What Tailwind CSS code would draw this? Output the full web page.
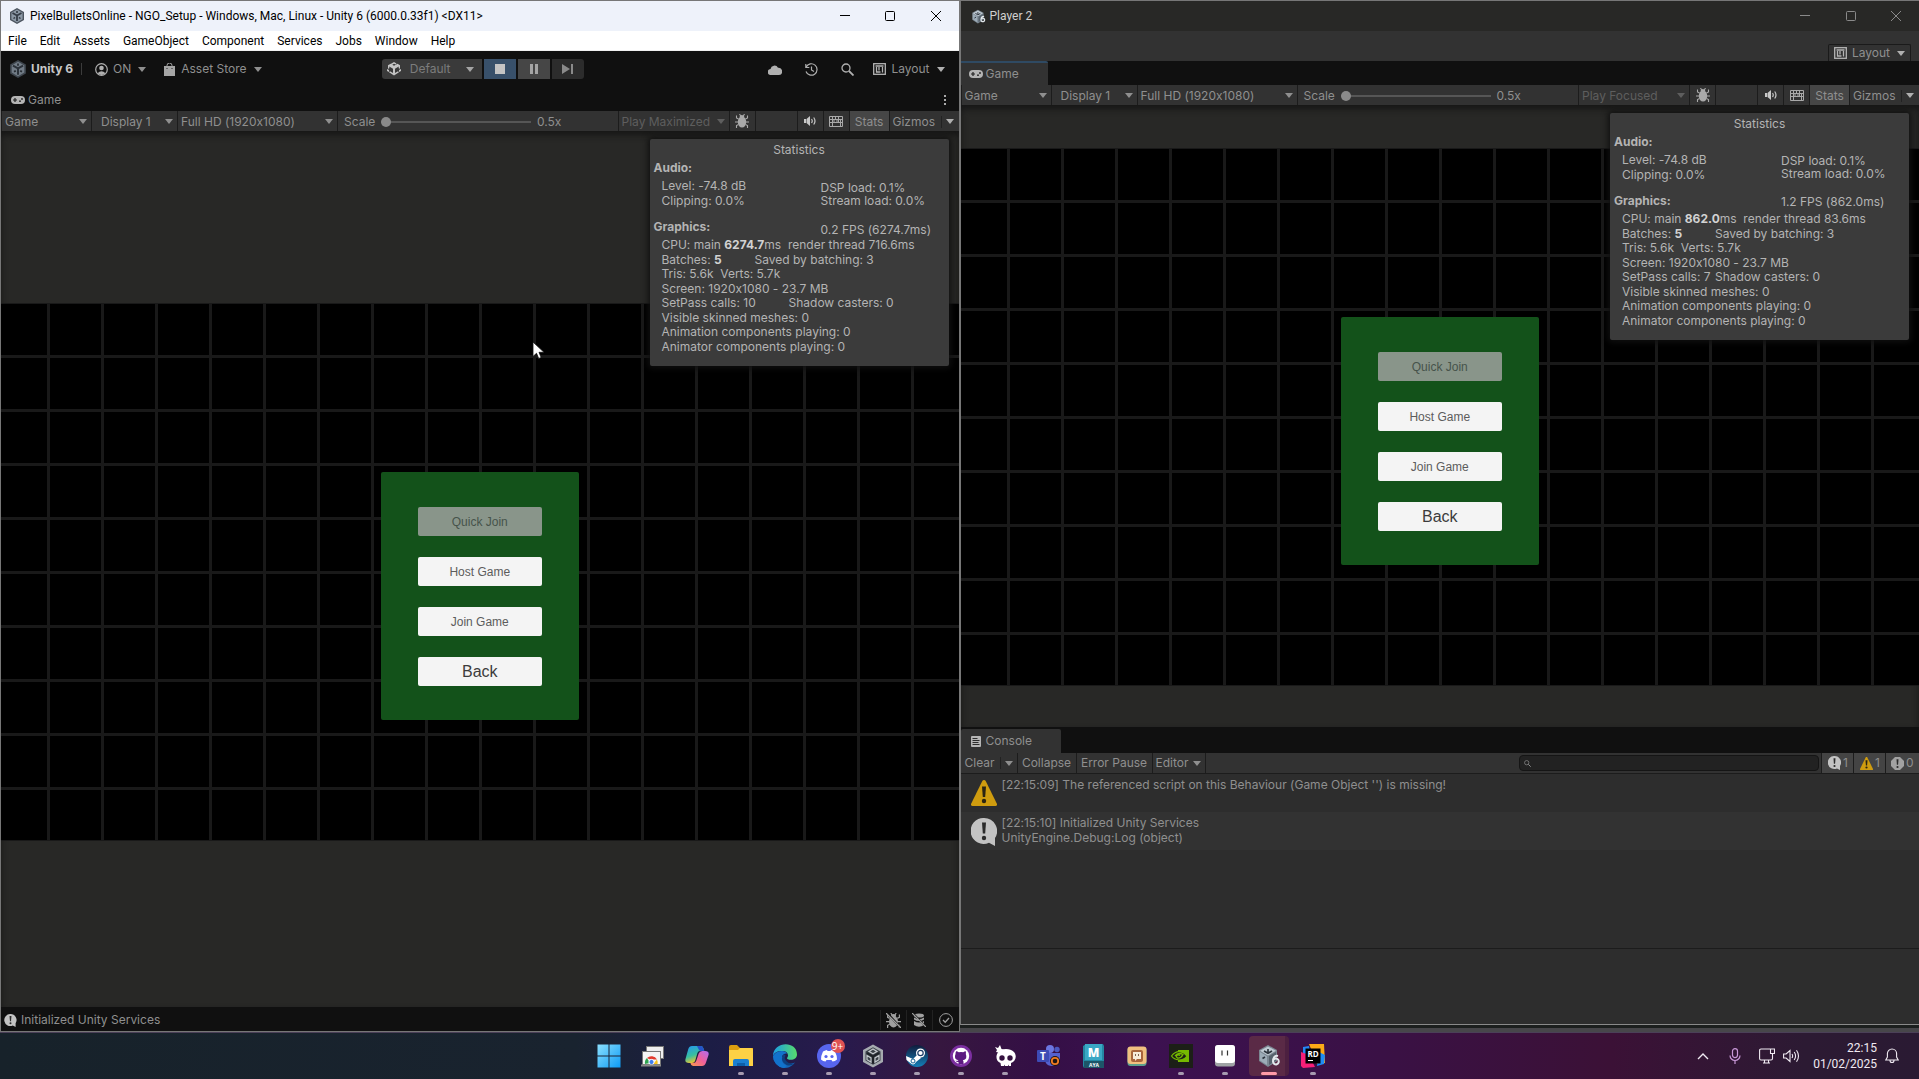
<!DOCTYPE html>
<html lang="en">
<head>
<meta charset="utf-8">
<title>Unity 6 desktop</title>
<script src="https://cdn.jsdelivr.net/npm/@tailwindcss/browser@4"></script>
</head>
<body class="h-screen overflow-hidden flex flex-col bg-[#47464a] font-['Inter',sans-serif] [font-feature-settings:'calt'_0] text-[12px] leading-4 text-[#8f8f8f]">

<!-- Shared icon symbols -->
<svg class="hidden" aria-hidden="true">
  <symbol id="arrow" viewBox="0 0 8 5"><path d="M0 0h8L4 5z" fill="currentColor"/></symbol>
  <symbol id="unity" viewBox="0 0 16 16">
    <path d="M8 0l7 4v8l-7 4-7-4V4z" fill="#4b545e"/>
    <path d="M8 1.500L13.600 4.800v6.400L8 14.500 2.400 11.200V4.800z" fill="#8b98a5"/>
    <path d="M8 7.500L3.500 5M8 7.500L12.500 5M8 7.500V13" stroke="#343c46" stroke-width="1.800" fill="none"/>
    <path d="M8 3v2M4.500 10.500l1.500-1M11.500 10.500l-1.500-1" stroke="#2b323a" stroke-width="1.500"/>
  </symbol>
  <symbol id="unity6" viewBox="0 0 24 24">
    <path d="M11 1l9 5v11l-9 6-9-6V6z" fill="#7b8792"/>
    <path d="M11 2.500l8 4.300-8 4.700-8-4.700z" fill="#bfcad3"/>
    <path d="M3 8l7 4.200v8.800l-7-4.500z" fill="#9dacb8"/>
    <path d="M19 8l-7 4.200v8.800l7-4.500z" fill="#56626d"/>
    <path d="M11 5v3M5.500 14.500l2.500-1.500M7 7l4 2.300L15 7" stroke="#2c343d" stroke-width="1.600" fill="none"/>
    <path d="M21 12c-3.500-1-5 2-5 5.500a2.900 2.900 0 1 0 .6-1.800" stroke="#e3e8ec" stroke-width="2" fill="none"/>
  </symbol>
  <symbol id="cube" viewBox="0 0 14 14">
    <path d="M4.500 1.500L7 0l2.500 1.500-.8 1L7 1.800l-1.700.9L7 3.700l3.500-2 2.500 1.500v3.500l-1.300-.4V4.500L8 6.700V11l3-1.700 1 1L7 13.500 2 10.300l1-1L6 11V6.700L2.300 4.500v1.800L1 6.700V3.200L3.200 2z" fill="#c4c4c4"/>
    <path d="M0 7l2 1v2l-2-1zM14 7l-2 1v2l2-1z" fill="#c4c4c4"/>
  </symbol>
  <symbol id="pad" viewBox="0 0 14 8">
    <rect width="14" height="8" rx="4" fill="#b4b4b4"/>
    <path d="M4 2v4M2 4h4" stroke="#222" stroke-width="1.200"/>
    <circle cx="9" cy="5.200" r=".9" fill="#222"/><circle cx="11" cy="3" r=".9" fill="#222"/>
  </symbol>
  <symbol id="bug" viewBox="0 0 14 14">
    <ellipse cx="7" cy="8" rx="4.200" ry="5.500" fill="currentColor"/>
    <path d="M4.500 3.500a2.500 2.500 0 0 1 5 0z" fill="currentColor"/>
    <path d="M4.500 0l1.200 2M9.500 0L8.300 2M3.500 5L1.500 4V1.500M10.500 5l2-1V1.500M3 8H0M11 8h3M3.500 10.500l-2 1V14M10.500 10.500l2 1V14" stroke="currentColor" stroke-width="1.100" fill="none"/>
  </symbol>
  <symbol id="speaker" viewBox="0 0 14 12">
    <path d="M1 4h2v4H1zM3.500 4L7 1v10L3.500 8z" fill="#c8c8c8"/>
    <path d="M8.500 4q1.500 2 0 4M10.700 2.500q2.600 3.500 0 7" stroke="#c8c8c8" stroke-width="1.200" fill="none"/>
  </symbol>
  <symbol id="keyboard" viewBox="0 0 14 11">
    <path d="M.5.500h13v10H.5zM.5 3.500h13M.5 6.500h13M3.500.500v6M6.500.500v3M9.500.500v6M5 3.500v3M8 3.500v3M11.500 3.500v7M3.500 6.500v4" stroke="#a9a9a9" fill="none"/>
  </symbol>
  <symbol id="layout" viewBox="0 0 13 12">
    <rect x=".7" y=".7" width="11.600" height="10.600" stroke="#b5b5b5" stroke-width="1.300" fill="none"/>
    <path d="M2.500 3h8M3.500 4v5.500M6 4v3.500M3 9h4.500M9.500 4v5.500" stroke="#b5b5b5" stroke-width="1.300"/>
  </symbol>
  <symbol id="search" viewBox="0 0 13 13"><circle cx="5" cy="5" r="4" stroke="currentColor" stroke-width="1.300" fill="none"/><path d="M8 8l4.500 4.500" stroke="currentColor" stroke-width="1.800"/></symbol>
  <symbol id="log" viewBox="0 0 26 28"><path d="M13 0a13 13 0 0 1 11 20v8l-6-3.200A13 13 0 1 1 13 0z" fill="#c3c3c3"/><path d="M11 4.500h4l-.8 11h-2.400z" fill="#2b2b2b"/><circle cx="13" cy="20" r="2.200" fill="#2b2b2b"/></symbol>
  <symbol id="warn" viewBox="0 0 26 26"><path d="M11.300 1a2 2 0 0 1 3.400 0L26 24q.2 2-1.500 2h-23Q-.2 26 0 24z" fill="#cf9c0f"/><path d="M11 6.500h4l-.8 10.500h-2.400z" fill="#2b2413"/><circle cx="13" cy="21" r="2.200" fill="#2b2413"/></symbol>
  <symbol id="error" viewBox="0 0 26 26"><path d="M8 0h10l8 8v10l-8 8H8l-8-8V8z" fill="#a2a2a2"/><path d="M11 4.500h4l-.8 11h-2.400z" fill="#2b2b2b"/><circle cx="13" cy="20" r="2.200" fill="#2b2b2b"/></symbol>
</svg>

<main class="flex-1 min-h-0 grid grid-cols-2">

  <!-- Main editor -->
  <section class="min-w-0 flex flex-col border border-[#777] bg-[#101010]" aria-label="Unity editor">
    <header class="h-[30px] shrink-0 flex items-center bg-[#eef2fa] pl-2 text-black font-['Roboto',sans-serif]">
      <svg class="size-4"><use href="#unity"/></svg>
      <h1 class="ml-[5px] flex-1">PixelBulletsOnline - NGO_Setup - Windows, Mac, Linux - Unity 6 (6000.0.33f1) &lt;DX11&gt;</h1>
      <button class="w-[46px] h-full grid place-items-center" aria-label="Minimise"><svg class="size-[10px]" viewBox="0 0 10 10"><path d="M0 4.500h10" stroke="currentColor"/></svg></button>
      <button class="w-[45px] h-full grid place-items-center" aria-label="Maximise"><svg class="size-[10px]" viewBox="0 0 10 10"><rect x=".5" y=".5" width="9" height="9" rx="1" fill="none" stroke="currentColor"/></svg></button>
      <button class="w-[46px] h-full grid place-items-center" aria-label="Close"><svg class="size-[10px]" viewBox="0 0 10 10"><path d="M0 0l10 10M10 0L0 10" stroke="currentColor"/></svg></button>
    </header>
    <nav class="h-5 shrink-0 flex items-center gap-[13px] border-b border-[#f0f0f0] bg-white pl-[7px] pt-px text-black font-['Roboto',sans-serif]">
      <a href="#">File</a><a href="#">Edit</a><a href="#">Assets</a><a href="#">GameObject</a><a href="#">Component</a><a href="#">Services</a><a href="#">Jobs</a><a href="#">Window</a><a href="#">Help</a>
    </nav>

    <div class="h-9 shrink-0 grid grid-cols-[1fr_auto_1fr] items-center">
      <div class="flex items-center pl-2">
        <svg class="size-[18px] opacity-80"><use href="#unity"/></svg>
        <b class="ml-1 font-bold text-[#c8c8c8]">Unity 6</b>
        <span class="ml-2 h-3 w-px bg-[#3c3c3c]"></span>
        <button class="ml-[13px] flex items-center">
          <svg class="size-[13px]" viewBox="0 0 13 13"><circle cx="6.500" cy="6.500" r="5.800" stroke="#b0b0b0" stroke-width="1.200" fill="none"/><circle cx="6.500" cy="5" r="2.300" fill="#b0b0b0"/><path d="M2.500 10.300q4-4 8 0-4 3.400-8 0z" fill="#b0b0b0"/></svg>
          <span class="ml-[5px]">ON</span><svg class="ml-[7px] w-2 h-[5px]"><use href="#arrow"/></svg>
        </button>
        <button class="ml-[18px] flex items-center">
          <svg class="w-[11px] h-[13px]" viewBox="0 0 11 13"><path d="M0 3h11v10H0z" fill="#a5a5a5"/><path d="M3 5V2.500a2.500 2.500 0 0 1 5 0V5" stroke="#a5a5a5" fill="none"/><path d="M3 5v1M8 5v1" stroke="#222"/></svg>
          <span class="ml-[6px]">Asset Store</span><svg class="ml-[7px] w-2 h-[5px]"><use href="#arrow"/></svg>
        </button>
      </div>
      <div class="ml-[6px] flex gap-[2px] h-5">
        <label class="w-[100px] grid grid-cols-[28px_1fr_16px] items-center rounded-l-[3px] bg-[#3a3a3a]" aria-label="Play mode scenario">
          <svg class="size-[14px] ml-[5px] col-start-1 row-start-1"><use href="#cube"/></svg>
          <svg class="w-2 h-[5px] col-start-3 row-start-1 text-[#a5a5a5]"><use href="#arrow"/></svg>
          <select class="col-start-1 col-span-3 row-start-1 h-5 appearance-none bg-transparent pl-7 text-[#7c7c7c]"><option>Default</option></select>
        </label>
        <button class="w-8 grid place-items-center bg-[#38506a]" aria-label="Stop"><span class="size-[10px] bg-[#c4c4c4]"></span></button>
        <button class="w-8 flex items-center justify-center gap-[2px] bg-[#464646]" aria-label="Pause"><span class="w-[3px] h-[10px] bg-[#a5a5a5]"></span><span class="w-[3px] h-[10px] bg-[#a5a5a5]"></span></button>
        <button class="w-8 grid place-items-center rounded-r-[3px] bg-[#2c2c2c]" aria-label="Step"><svg class="w-[11px] h-[10px]" viewBox="0 0 11 10"><path d="M0 0l8 5-8 5zM9 0h2v10H9z" fill="#8a8a8a"/></svg></button>
      </div>
      <div class="flex items-center justify-end pr-[14px] text-[#b0b0b0]">
        <button aria-label="Cloud"><svg class="w-[14px] h-[11px]" viewBox="0 0 14 11"><path d="M3 11a3 3 0 0 1-.5-6A4 4 0 0 1 10 3.800 3.600 3.600 0 0 1 11 11z" fill="currentColor"/></svg></button>
        <button class="ml-[23px]" aria-label="History"><svg class="size-[13px]" viewBox="0 0 13 13"><path d="M1.200 4A5.700 5.700 0 1 1 1 8.500M.8 1v3.500h3.500M6.500 3.500V7l2.500 1.500" stroke="currentColor" stroke-width="1.200" fill="none"/></svg></button>
        <button class="ml-[23px]" aria-label="Search"><svg class="size-[13px]"><use href="#search"/></svg></button>
        <button class="ml-[19px] flex items-center text-[#8f8f8f]"><svg class="w-[13px] h-3"><use href="#layout"/></svg><span class="ml-[5px]">Layout</span><svg class="ml-[7px] w-2 h-[5px] text-[#b0b0b0]"><use href="#arrow"/></svg></button>
      </div>
    </div>

    <div class="h-6 shrink-0 flex items-center pl-[10px] pr-[13px] pt-[2px]">
      <svg class="w-[14px] h-2"><use href="#pad"/></svg><span class="ml-[3px] flex-1">Game</span>
      <button class="flex flex-col gap-[2px]" aria-label="Tab options"><span class="size-[2px] bg-[#aaa]"></span><span class="size-[2px] bg-[#aaa]"></span><span class="size-[2px] bg-[#aaa]"></span></button>
    </div>

    <!-- Game view toolbar -->
    <div class="h-5 shrink-0 flex gap-px bg-[#1c1c1c] pl-px">
      <label class="w-[89px] grid grid-cols-[1fr_12px] items-center bg-[#323232]"><svg class="w-2 h-[5px] col-start-2 row-start-1"><use href="#arrow"/></svg><select aria-label="View" class="col-start-1 col-span-2 row-start-1 h-5 appearance-none bg-transparent pl-[3px] pt-px"><option>Game</option></select></label>
      <label class="w-[85px] grid grid-cols-[1fr_12px] items-center bg-[#323232]"><svg class="w-2 h-[5px] col-start-2 row-start-1"><use href="#arrow"/></svg><select aria-label="Display" class="col-start-1 col-span-2 row-start-1 h-5 appearance-none bg-transparent pl-[9px] pt-px"><option>Display 1</option></select></label>
      <label class="w-[159px] grid grid-cols-[1fr_12px] items-center bg-[#323232]"><svg class="w-2 h-[5px] col-start-2 row-start-1"><use href="#arrow"/></svg><select aria-label="Resolution" class="col-start-1 col-span-2 row-start-1 h-5 appearance-none bg-transparent pl-[3px] pt-px"><option>Full HD (1920x1080)</option></select></label>
      <label class="flex-1 flex items-center bg-[#323232] pl-[6px] pt-px"><span class="w-[37px]">Scale</span>
        <input type="range" min="0" max="100" value="0" class="w-[150px] h-[10px] appearance-none bg-transparent [&::-webkit-slider-runnable-track]:h-[2px] [&::-webkit-slider-runnable-track]:bg-[#565656] [&::-webkit-slider-thumb]:appearance-none [&::-webkit-slider-thumb]:size-[10px] [&::-webkit-slider-thumb]:-mt-1 [&::-webkit-slider-thumb]:rounded-full [&::-webkit-slider-thumb]:bg-[#8a8a8a]"><span class="ml-[6px]">0.5x</span></label>
      <label class="w-[110px] grid grid-cols-[1fr_12px] items-center bg-[#323232] text-[#5e5e5e]"><svg class="w-2 h-[5px] col-start-2 row-start-1"><use href="#arrow"/></svg><select disabled aria-label="Play mode" class="col-start-1 col-span-2 row-start-1 h-5 appearance-none bg-transparent pl-[3px] pt-px opacity-100"><option>Play Maximized</option></select></label>
      <button class="w-[25px] grid place-items-center bg-[#323232] text-[#a9a9a9]" aria-label="Debug"><svg class="size-[14px]"><use href="#bug"/></svg></button>
      <span class="w-[41px] bg-[#323232]"></span>
      <button class="w-[25px] grid place-items-center bg-[#323232]" aria-label="Mute audio"><svg class="w-[14px] h-3"><use href="#speaker"/></svg></button>
      <button class="w-[25px] grid place-items-center bg-[#323232]" aria-label="Shortcuts"><svg class="w-[14px] h-[11px]"><use href="#keyboard"/></svg></button>
      <button class="w-[39px] bg-[#464646] pt-px">Stats</button>
      <div class="w-[69px] flex items-center bg-[#323232] pl-[3px] pt-px"><button class="flex-1 text-left">Gizmos</button><button class="h-3 w-[18px] flex items-center border-l border-[#222] pl-[4px]" aria-label="Gizmo options"><svg class="w-2 h-[5px] text-[#b0b0b0]"><use href="#arrow"/></svg></button></div>
    </div>

    <div class="relative flex-1 min-h-0 flex flex-col justify-center overflow-hidden bg-[#282826] pt-[6px] shadow-[inset_0_4px_6px_#161616]">
      <div class="w-full aspect-[958/538] flex justify-center items-start border-y border-[#191919] bg-black bg-[linear-gradient(#191919_3px,transparent_3px),linear-gradient(90deg,#191919_3px,transparent_3px)] [background-size:54px_54px] [background-position:46px_51px] pt-[168px]">
        <div class="w-[198px] h-[248px] flex flex-col items-center gap-[21px] rounded-[2px] bg-[#13521a] pt-[35px] font-['Liberation_Sans',sans-serif] text-[#5c5c5c]">
          <button disabled class="w-[124px] h-[29px] rounded-[2px] bg-[#89958a] pt-px text-[#46534a]">Quick Join</button>
          <button class="w-[124px] h-[29px] rounded-[2px] bg-[#f4f4f4] pt-px">Host Game</button>
          <button class="w-[124px] h-[29px] rounded-[2px] bg-[#f4f4f4] pt-px">Join Game</button>
          <button class="w-[124px] h-[29px] rounded-[2px] bg-[#f4f4f4] pt-px text-[16px] text-[#3c3c3c]">Back</button>
        </div>
      </div>

      <aside class="absolute top-2 right-[10px] w-[299px] h-[227px] rounded-[2px] bg-[#3b3b3b] px-1 pt-[3px] text-[#b4b4b4] shadow-[0_0_6px_2px_#101010]">
        <h2 class="text-center">Statistics</h2>
        <h3 class="mt-[2px] font-bold">Audio:</h3>
        <div class="mt-[2px] grid grid-cols-[159px_1fr] pl-2">
          <div class="leading-[15px]">Level: -74.8 dB<br>Clipping: 0.0%</div>
          <div class="pt-[3px] leading-[13px]">DSP load: 0.1%<br>Stream load: 0.0%</div>
        </div>
        <div class="mt-[11px] h-[19px] grid grid-cols-[167px_1fr]"><h3 class="font-bold">Graphics:</h3><span class="pt-[3px]">0.2 FPS (6274.7ms)</span></div>
        <div class="h-[116px] flex flex-col justify-between pl-2 leading-[14px] whitespace-pre"><p>CPU: main <b class="text-[#d2d2d2]">6274.7</b>ms  render thread 716.6ms</p><p class="grid grid-cols-[93px_1fr]"><span>Batches: <b class="text-[#d2d2d2]">5</b></span><span>Saved by batching: 3</span></p><p>Tris: 5.6k  Verts: 5.7k</p><p>Screen: 1920x1080 - 23.7 MB</p><p class="grid grid-cols-[127px_1fr]"><span>SetPass calls: 10</span><span>Shadow casters: 0</span></p><p>Visible skinned meshes: 0</p><p>Animation components playing: 0</p><p>Animator components playing: 0</p></div>
      </aside>

      <svg class="absolute left-[531px] top-[210px] w-[13px] h-[19px]" viewBox="0 0 13 19"><path d="M1 1v14.500l3.500-3.200 2.200 5.200 2.500-1-2.200-5.200h5z" fill="#fff" stroke="#111" stroke-width=".8"/></svg>
    </div>

    <footer class="h-6 shrink-0 flex items-center pl-[3px] pt-[2px]">
      <svg class="size-[13px]"><use href="#log"/></svg><span class="ml-1 flex-1">Initialized Unity Services</span>
      <button class="w-[26px] h-5 grid place-items-center border-l border-[#222] text-[#a0a0a0]" aria-label="Debugger off"><svg class="size-[15px]" viewBox="0 0 14 14"><use href="#bug"/><path d="M1 0l13 14" stroke="#101010" stroke-width="2"/><path d="M0 0l14 14" stroke="currentColor" stroke-width="1.200"/></svg></button>
      <button class="w-[26px] h-5 grid place-items-center border-l border-[#222] text-[#a0a0a0]" aria-label="Cache server off"><svg class="size-[14px]" viewBox="0 0 14 14"><ellipse cx="7" cy="2.500" rx="5" ry="2" fill="currentColor"/><path d="M2 4.500q5 3 10 0v2q-5 3-10 0zM2 8q5 3 10 0v4q-5 3.500-10 0z" fill="currentColor"/><path d="M1 0l13 14" stroke="#101010" stroke-width="1.500"/><path d="M0 0l14 14" stroke="currentColor" stroke-width="1.200"/></svg></button>
      <button class="w-[27px] h-5 grid place-items-center border-l border-[#222] text-[#a0a0a0]" aria-label="Progress"><svg class="size-[14px]" viewBox="0 0 14 14"><circle cx="7" cy="7" r="6.400" stroke="currentColor" fill="none"/><path d="M4 7l2.200 2.200L10 5" stroke="currentColor" stroke-width="1.300" fill="none"/></svg></button>
    </footer>
  </section>

  <!-- Second player window -->
  <section class="min-w-0 mb-[7px] flex flex-col border-t border-l border-b border-t-[#777] border-l-[#777] border-b-[#8a8a8a] bg-[#2d2d2d] shadow-[0_3px_0_#1c1f1e]" aria-label="Player 2">
    <header class="h-[30px] shrink-0 flex items-center bg-[#282826] pl-[10px] text-[#d0d0d0] font-['Roboto',sans-serif]">
      <svg class="size-[15px]"><use href="#unity6"/></svg>
      <h1 class="ml-1 flex-1">Player 2</h1>
      <button class="w-[46px] h-full grid place-items-center text-[#8a8a8a]" aria-label="Minimise"><svg class="size-[10px]" viewBox="0 0 10 10"><path d="M0 4.500h10" stroke="currentColor"/></svg></button>
      <button class="w-[45px] h-full grid place-items-center text-[#8a8a8a]" aria-label="Maximise"><svg class="size-[10px]" viewBox="0 0 10 10"><rect x=".5" y=".5" width="9" height="9" rx="1" fill="none" stroke="currentColor"/></svg></button>
      <button class="w-[46px] h-full grid place-items-center text-[#8a8a8a]" aria-label="Close"><svg class="size-[10px]" viewBox="0 0 10 10"><path d="M0 0l10 10M10 0L0 10" stroke="currentColor"/></svg></button>
    </header>
    <div class="h-[30px] shrink-0 flex items-end justify-end bg-[#323232] pr-2">
      <button class="h-[17px] flex items-center border border-b-0 border-[#1a1a1a] rounded-t-[2px] pl-[5px] pr-[5px]"><svg class="w-[13px] h-3"><use href="#layout"/></svg><span class="ml-[5px]">Layout</span><svg class="ml-[7px] w-2 h-[5px] text-[#b0b0b0]"><use href="#arrow"/></svg></button>
    </div>
    <div class="h-6 shrink-0 flex bg-[#101010]">
      <button class="w-[87px] flex items-center border-t-2 border-[#2f4a63] rounded-tr-[2px] bg-[#323232] pl-2"><svg class="w-[14px] h-2"><use href="#pad"/></svg><span class="ml-[3px]">Game</span></button>
    </div>

    <div class="h-5 shrink-0 flex gap-px bg-[#1c1c1c] pl-px">
      <label class="w-[89px] grid grid-cols-[1fr_12px] items-center bg-[#323232]"><svg class="w-2 h-[5px] col-start-2 row-start-1"><use href="#arrow"/></svg><select aria-label="View" class="col-start-1 col-span-2 row-start-1 h-5 appearance-none bg-transparent pl-[3px] pt-px"><option>Game</option></select></label>
      <label class="w-[85px] grid grid-cols-[1fr_12px] items-center bg-[#323232]"><svg class="w-2 h-[5px] col-start-2 row-start-1"><use href="#arrow"/></svg><select aria-label="Display" class="col-start-1 col-span-2 row-start-1 h-5 appearance-none bg-transparent pl-[9px] pt-px"><option>Display 1</option></select></label>
      <label class="w-[159px] grid grid-cols-[1fr_12px] items-center bg-[#323232]"><svg class="w-2 h-[5px] col-start-2 row-start-1"><use href="#arrow"/></svg><select aria-label="Resolution" class="col-start-1 col-span-2 row-start-1 h-5 appearance-none bg-transparent pl-[3px] pt-px"><option>Full HD (1920x1080)</option></select></label>
      <label class="flex-1 flex items-center bg-[#323232] pl-[6px] pt-px"><span class="w-[37px]">Scale</span>
        <input type="range" min="0" max="100" value="0" class="w-[150px] h-[10px] appearance-none bg-transparent [&::-webkit-slider-runnable-track]:h-[2px] [&::-webkit-slider-runnable-track]:bg-[#565656] [&::-webkit-slider-thumb]:appearance-none [&::-webkit-slider-thumb]:size-[10px] [&::-webkit-slider-thumb]:-mt-1 [&::-webkit-slider-thumb]:rounded-full [&::-webkit-slider-thumb]:bg-[#8a8a8a]"><span class="ml-[6px]">0.5x</span></label>
      <label class="w-[110px] grid grid-cols-[1fr_12px] items-center bg-[#323232] text-[#5e5e5e]"><svg class="w-2 h-[5px] col-start-2 row-start-1"><use href="#arrow"/></svg><select disabled aria-label="Play mode" class="col-start-1 col-span-2 row-start-1 h-5 appearance-none bg-transparent pl-[3px] pt-px opacity-100"><option>Play Focused</option></select></label>
      <button class="w-[25px] grid place-items-center bg-[#323232] text-[#a9a9a9]" aria-label="Debug"><svg class="size-[14px]"><use href="#bug"/></svg></button>
      <span class="w-[41px] bg-[#323232]"></span>
      <button class="w-[25px] grid place-items-center bg-[#323232]" aria-label="Mute audio"><svg class="w-[14px] h-3"><use href="#speaker"/></svg></button>
      <button class="w-[25px] grid place-items-center bg-[#323232]" aria-label="Shortcuts"><svg class="w-[14px] h-[11px]"><use href="#keyboard"/></svg></button>
      <button class="w-[39px] bg-[#464646] pt-px">Stats</button>
      <div class="w-[69px] flex items-center bg-[#323232] pl-[3px] pt-px"><button class="flex-1 text-left">Gizmos</button><button class="h-3 w-[18px] flex items-center border-l border-[#222] pl-[4px]" aria-label="Gizmo options"><svg class="w-2 h-[5px] text-[#b0b0b0]"><use href="#arrow"/></svg></button></div>
    </div>

    <div class="relative flex-[622] min-h-0 flex flex-col justify-center overflow-hidden bg-[#282826] pt-px shadow-[inset_0_4px_6px_#161616]">
      <div class="w-full aspect-[958/538] flex justify-center items-start border-y border-[#191919] bg-black bg-[linear-gradient(#191919_3px,transparent_3px),linear-gradient(90deg,#191919_3px,transparent_3px)] [background-size:54px_54px] [background-position:46px_51px] pt-[168px]">
        <div class="w-[198px] h-[248px] flex flex-col items-center gap-[21px] rounded-[2px] bg-[#13521a] pt-[35px] font-['Liberation_Sans',sans-serif] text-[#5c5c5c]">
          <button disabled class="w-[124px] h-[29px] rounded-[2px] bg-[#89958a] pt-px text-[#46534a]">Quick Join</button>
          <button class="w-[124px] h-[29px] rounded-[2px] bg-[#f4f4f4] pt-px">Host Game</button>
          <button class="w-[124px] h-[29px] rounded-[2px] bg-[#f4f4f4] pt-px">Join Game</button>
          <button class="w-[124px] h-[29px] rounded-[2px] bg-[#f4f4f4] pt-px text-[16px] text-[#3c3c3c]">Back</button>
        </div>
      </div>
      <aside class="absolute top-2 right-[10px] w-[299px] h-[227px] rounded-[2px] bg-[#3b3b3b] px-1 pt-[3px] text-[#b4b4b4] shadow-[0_0_6px_2px_#101010]">
        <h2 class="text-center">Statistics</h2>
        <h3 class="mt-[2px] font-bold">Audio:</h3>
        <div class="mt-[2px] grid grid-cols-[159px_1fr] pl-2">
          <div class="leading-[15px]">Level: -74.8 dB<br>Clipping: 0.0%</div>
          <div class="pt-[2px] leading-[13px]">DSP load: 0.1%<br>Stream load: 0.0%</div>
        </div>
        <div class="mt-[11px] h-[19px] grid grid-cols-[167px_1fr]"><h3 class="font-bold">Graphics:</h3><span class="pt-[1px]">1.2 FPS (862.0ms)</span></div>
        <div class="h-[116px] flex flex-col justify-between pl-2 leading-[14px] whitespace-pre"><p>CPU: main <b class="text-[#d2d2d2]">862.0</b>ms  render thread 83.6ms</p><p class="grid grid-cols-[93px_1fr]"><span>Batches: <b class="text-[#d2d2d2]">5</b></span><span>Saved by batching: 3</span></p><p>Tris: 5.6k  Verts: 5.7k</p><p>Screen: 1920x1080 - 23.7 MB</p><p class="grid grid-cols-[93px_1fr]"><span>SetPass calls: 7</span><span>Shadow casters: 0</span></p><p>Visible skinned meshes: 0</p><p>Animation components playing: 0</p><p>Animator components playing: 0</p></div>
      </aside>
    </div>

    <!-- Console -->
    <div class="flex-[297] min-h-0 flex flex-col">
      <div class="h-[26px] shrink-0 flex items-end bg-[#101010]">
        <button class="w-[100px] h-6 flex items-center rounded-t-[2px] bg-[#323232] pl-[10px]"><svg class="w-[10px] h-[11px]" viewBox="0 0 10 11"><rect width="10" height="11" rx="1" fill="#b5b5b5"/><path d="M1.500 2.500h5M1.500 4.500h7M1.500 6.500h6M1.500 8.500h7" stroke="#2c2c2c"/></svg><span class="ml-[5px]">Console</span></button>
      </div>
      <div class="h-[21px] shrink-0 flex items-stretch border-b border-[#1c1c1c] bg-[#323232]">
        <div class="w-[57px] flex items-center border-r border-[#1c1c1c] pl-1"><button class="w-[35px] text-left">Clear</button><button class="h-3 flex items-center border-l border-[#222] pl-[4px]" aria-label="Clear options"><svg class="w-2 h-[5px]"><use href="#arrow"/></svg></button></div>
        <button class="w-[59px] border-r border-[#1c1c1c]">Collapse</button>
        <button class="w-[76px] border-r border-[#1c1c1c]">Error Pause</button>
        <label class="w-[53px] grid grid-cols-[1fr_12px] items-center border-r border-[#1c1c1c]"><svg class="w-2 h-[5px] col-start-2 row-start-1"><use href="#arrow"/></svg><select aria-label="Log source" class="col-start-1 col-span-2 row-start-1 h-5 appearance-none bg-transparent pl-[3px]"><option>Editor</option></select></label>
        <label class="ml-auto mr-[2px] mt-[2px] w-[300px] h-4 flex items-center rounded-[4px] border border-[#151515] bg-[#222] pl-1"><svg class="size-[7px]"><use href="#search"/></svg><input type="search" aria-label="Search console" class="flex-1 min-w-0 bg-transparent outline-none"></label>
        <button class="w-8 flex items-center border-l border-[#1c1c1c] bg-[#444] pl-[6px]"><svg class="w-[13px] h-[14px]"><use href="#log"/></svg><span class="ml-[2px]">1</span></button>
        <button class="w-8 flex items-center border-l border-[#1c1c1c] bg-[#444] pl-[6px]"><svg class="size-[13px]"><use href="#warn"/></svg><span class="ml-[2px]">1</span></button>
        <button class="w-[34px] flex items-center border-l border-[#1c1c1c] bg-[#444] pl-[5px]"><svg class="size-[13px]"><use href="#error"/></svg><span class="ml-[2px]">0</span></button>
      </div>
      <ul class="flex-1 min-h-0 leading-[15px]">
        <li class="h-[38px] flex pl-[10px] pt-[3px]"><svg class="mt-[3px] size-[26px]"><use href="#warn"/></svg><p class="ml-[5px]">[22:15:09] The referenced script on this Behaviour (Game Object '') is missing!</p></li>
        <li class="h-[38px] flex bg-[#323232] pl-[10px] pt-[3px]"><svg class="mt-[3px] w-[26px] h-[28px]"><use href="#log"/></svg><p class="ml-[5px]">[22:15:10] Initialized Unity Services<br>UnityEngine.Debug:Log (object)</p></li>
      </ul>
      <div class="h-[76px] shrink-0 border-t border-[#1c1c1c]"></div>
    </div>
  </section>
</main>

<!-- Taskbar -->
<footer class="h-[47px] shrink-0 grid grid-cols-[1fr_auto_1fr] border-t border-[#4b4058] bg-[linear-gradient(90deg,#17222a_0%,#19232f_30%,#1c1d45_37%,#281a4c_44%,#36173f_49%,#340f45_54%,#3c1150_60%,#3a1145_72%,#3b1136_84%,#2c1a33_94%,#2a1a33_100%)]">
  <span></span>
  <nav class="flex pl-[2px]" aria-label="Taskbar">
    <button class="w-11 flex flex-col items-center pt-[11px] gap-1" aria-label="Start"><svg class="size-6" viewBox="0 0 24 24"><defs><linearGradient id="w" x2="1" y2="1"><stop stop-color="#8be0ff"/><stop offset="1" stop-color="#0d9bf5"/></linearGradient></defs><path d="M.5.500h11v11H.5zM12.500.500h11v11h-11zM.5 12.500h11v11H.5zM12.500 12.500h11v11h-11z" fill="url(#w)"/></svg></button>
    <button class="w-11 flex flex-col items-center pt-[11px] gap-1" aria-label="Chrome Remote Desktop"><svg class="size-6" viewBox="0 0 24 24"><rect x="5.500" y="2.500" width="17" height="12" fill="#eee" stroke="#777"/><rect x="1.500" y="7.500" width="18" height="13" fill="#f5f5f5" stroke="#777"/><path d="M4 20a6.500 6.500 0 0 1 2-6l3 5z" fill="#2ea44f"/><path d="M6 14a6.500 6.500 0 0 1 10 1.500H9z" fill="#e33b2e"/><path d="M16 15.500a7 7 0 0 1 .5 4.500H12z" fill="#f7c21a"/><circle cx="10.500" cy="18" r="2.600" fill="#3c7df0" stroke="#fff"/><path d="M0 20.500h20v2H0z" fill="#888"/></svg></button>
    <button class="w-11 flex flex-col items-center pt-[11px] gap-1" aria-label="Copilot"><svg class="size-6" viewBox="0 0 24 24"><defs><linearGradient id="c1" x2=".4" y2="1"><stop stop-color="#2494f2"/><stop offset=".6" stop-color="#38c0a0"/><stop offset="1" stop-color="#f4c52e"/></linearGradient><linearGradient id="c2" x1="1" x2="0" y2="1"><stop stop-color="#b06cf2"/><stop offset=".5" stop-color="#f0609a"/><stop offset="1" stop-color="#fb9a4a"/></linearGradient></defs><path d="M7 2h9q2 0 2.700 3l.6 2H15q-2 0-2.600 2l-2 7q-.8 3-3.400 3H4q-4.500 0-3.500-4L3.300 5Q4.200 2 7 2z" fill="url(#c1)"/><path d="M12 2h4q2 0 2.700 3l.6 2H16q-2 0-2.500-2z" fill="#2554c8"/><path d="M17 22H8q-2 0-2.600-3H8q2.700 0 3.400-2.500l2.300-7q.8-2.500 3.500-2.500H20q4.500 0 3.500 4l-2.700 8q-1 3-3.800 3z" fill="url(#c2)"/></svg></button>
    <button class="w-11 flex flex-col items-center pt-[11px] gap-1" aria-label="File Explorer"><svg class="size-6" viewBox="0 0 24 24"><path d="M0 3q0-2 2-2h6l3 3h13v18H0z" fill="#dd9e10"/><path d="M0 6h9l2-2h11q2 0 2 2v16H0z" fill="#fdd145"/><path d="M4 22v-5q0-2 2-2h12q2 0 2 2v5z" fill="#1b7fd0"/><path d="M8 19h8v3H8z" fill="#0e5fa8"/></svg><i class="w-[6px] h-[3px] rounded-full bg-[#a79bb0]"></i></button>
    <button class="w-11 flex flex-col items-center pt-[11px] gap-1" aria-label="Edge"><svg class="size-6" viewBox="0 0 24 24"><defs><linearGradient id="e" x2="1"><stop stop-color="#1a9de6"/><stop offset="1" stop-color="#57dc6b"/></linearGradient></defs><path d="M0 12a12 12 0 0 0 22 6.500q-4 2-8 .5t-4-6z" fill="#1565b8"/><path d="M0 12C0-3 24-4 24 10.500c0 5-6 6.500-9.500 4.500-1.500-1 .8-1.500.5-4C14.500 8 12 6.500 9 7 4 7 1 9 0 12z" fill="url(#e)"/><path d="M0 12q3-5 9-5 4 .3 5 2.500-3-.5-4.500 2-2.500 7 4 10.500-1 1.500-3 1.900A12 12 0 0 1 0 12z" fill="#1272cc"/><path d="M9.500 11.500q-2 7 4 9.500 4 1.500 8-1.500-6 1-9-3.500-1.500-2.500 0-4.500-1-2-3 0z" fill="#0d3f80"/></svg><i class="w-[6px] h-[3px] rounded-full bg-[#a79bb0]"></i></button>
    <button class="relative w-11 flex flex-col items-center pt-[11px] gap-1" aria-label="Discord"><svg class="size-6" viewBox="0 0 24 24"><circle cx="12" cy="12" r="12" fill="#5765ee"/><path d="M6 7.500q2.500-1.500 4-1.500l.5 1h3l.5-1q2 0 4 1.500 2 4 2 8-2 2-4.500 2l-1-1.500h-5l-1 1.500q-2.500 0-4.500-2 0-4 2-8z" fill="#fff"/><circle cx="9" cy="12.500" r="1.600" fill="#5765ee"/><circle cx="15" cy="12.500" r="1.600" fill="#5765ee"/></svg><i class="w-[6px] h-[3px] rounded-full bg-[#a79bb0]"></i><span class="absolute left-[24px] top-[6px] size-[14px] rounded-full bg-[#df5253] text-white text-[10px] leading-[14px] text-center font-['Open_Sans',sans-serif]">9+</span></button>
    <button class="w-11 flex flex-col items-center pt-[11px] gap-1" aria-label="Unity Hub"><svg class="size-6" viewBox="0 0 24 24"><path d="M12 .5L22 6v12l-10 5.500L2 18V6z" fill="#a6abb0"/><path d="M12 3.200l7.500 4.300v9L12 20.800l-7.500-4.300v-9z" fill="#3a4047"/><path d="M12 12.500L6 9M12 12.500L18 9M12 12.500V19.500" stroke="#1d2126" stroke-width="2" fill="none"/><path d="M8 7.500l4-2.500 4 2.500-4 2.300zM6 11.500l4 2.400v4.200l-4-2.400zM18 11.500l-4 2.400v4.200l4-2.400z" stroke="#c3c8cc" stroke-width="1.200" fill="none"/></svg><i class="w-[6px] h-[3px] rounded-full bg-[#a79bb0]"></i></button>
    <button class="w-11 flex flex-col items-center pt-[11px] gap-1" aria-label="Steam"><svg class="size-6" viewBox="0 0 24 24"><defs><linearGradient id="s" x2="0" y2="1"><stop stop-color="#101c3c"/><stop offset="1" stop-color="#1480b8"/></linearGradient></defs><circle cx="12" cy="12" r="11" fill="url(#s)"/><path d="M1 12l7 3 5-5 3 4-5 4q-2 4-5 1.500L1.500 16z" fill="#fff"/><circle cx="15.500" cy="9" r="4.500" fill="#fff"/><circle cx="15.500" cy="9" r="2.700" fill="#fff" stroke="#1a3c66" stroke-width="1.200"/><circle cx="8" cy="17" r="2" fill="none" stroke="#146294"/></svg><i class="w-[6px] h-[3px] rounded-full bg-[#a79bb0]"></i></button>
    <button class="w-11 flex flex-col items-center pt-[11px] gap-1" aria-label="GitHub"><svg class="size-6" viewBox="0 0 24 24"><circle cx="12" cy="12" r="11" fill="#7b2fa0"/><circle cx="12" cy="12" r="8.200" fill="#fff"/><path d="M7.500 7l2.300 1.200q2.200-.6 4.400 0L16.500 7q.8 1.500.3 3 2.200 5.500-3 6.200.7.800.7 1.500V20h-5v-2q-2 .3-3-1.500 1.800 1 3-.3-5.200-.7-3-6.200-.3-1.500 1-3z" fill="#5c1a80"/></svg><i class="w-[6px] h-[3px] rounded-full bg-[#a79bb0]"></i></button>
    <button class="w-11 flex flex-col items-center pt-[11px] gap-1" aria-label="Skull app"><svg class="size-6" viewBox="0 0 24 24"><path d="M2 3l3 1 2-3 1.500 4L12 6l-4 3-5-1 1-2z" fill="#fff"/><path d="M13 5c12 0 12 12 5 14v3h-2l-.5-1.500L15 22h-3l-.5-1.500L11 22H8l-.5-3C1 17 2 5 13 5z" fill="#fff"/><circle cx="9" cy="14" r="2.700" fill="#34103f"/><circle cx="17" cy="14" r="2.700" fill="#34103f"/></svg><i class="w-[6px] h-[3px] rounded-full bg-[#a79bb0]"></i></button>
    <button class="w-11 flex flex-col items-center pt-[11px] gap-1" aria-label="Teams"><svg class="size-6" viewBox="0 0 24 24"><circle cx="13" cy="5" r="4" fill="#6b76e0"/><circle cx="20" cy="5.500" r="2.700" fill="#4c58c0"/><path d="M8 9h15v7q-3 6-9 6-6-1-6-7z" fill="#5561cf"/><rect y="6" width="12" height="12" rx="1" fill="#3d4bb5"/><text x="6" y="15.500" text-anchor="middle" font-family="Open Sans" font-weight="700" font-size="10" fill="#fff">T</text><circle cx="18" cy="17" r="5" fill="#1d1512"/><circle cx="18" cy="17" r="3.200" fill="none" stroke="#ef7a22" stroke-width="1.800"/></svg></button>
    <button class="w-11 flex flex-col items-center pt-[11px] gap-1" aria-label="Maya"><svg class="size-6" viewBox="0 0 24 24"><path d="M2 2l3-2h17l1 2v20l-1 2H3l-1-2z" fill="#2488a3"/><path d="M4 0h17v16H4z" fill="#3aa7c4"/><path d="M3 17h20v7H3z" fill="#1d5568"/><text x="12.500" y="13" text-anchor="middle" font-family="Open Sans" font-weight="800" font-size="12" fill="#fff">M</text><text x="13" y="22.500" text-anchor="middle" font-family="Open Sans" font-weight="700" font-size="5" fill="#fff">AYA</text></svg></button>
    <button class="w-11 flex flex-col items-center pt-[11px] gap-1" aria-label="Chat"><svg class="size-6" viewBox="0 0 24 24"><rect x="2.500" y="3" width="19" height="19" rx="3" fill="#5ba08e"/><rect x="2.500" y="2.500" width="19" height="17.500" rx="3" fill="#f0c080"/><rect x="6" y="6" width="12" height="12" rx="2" fill="#a8653c"/><path d="M8 8h8v7h-4l-2 2v-2H8z" fill="#f7ead8"/><path d="M10 11h1M13 11h1" stroke="#5a3422" stroke-width="1.500"/></svg></button>
    <button class="w-11 flex flex-col items-center pt-[11px] gap-1" aria-label="NVIDIA"><svg class="size-6" viewBox="0 0 24 24"><rect width="24" height="24" fill="#1c1f17"/><path d="M9 6h11v12H9z" fill="#76b900"/><path d="M2.500 12Q8 5 15.500 9.500L18 12q-3 4-8 4-5-.5-7.500-4z" fill="#1c1f17" stroke="#76b900" stroke-width="1.200"/><path d="M6 12q3-4 8-1.500-2 4-5.500 3.500-1.500-.7-1-2.500 2-1.500 3.500 0" stroke="#76b900" stroke-width="1.300" fill="none"/></svg><i class="w-[6px] h-[3px] rounded-full bg-[#a79bb0]"></i></button>
    <button class="w-11 flex flex-col items-center pt-[11px] gap-1" aria-label="Notes"><svg class="size-6" viewBox="0 0 24 24"><rect x="2" y="1" width="20" height="21.500" rx="3" fill="#9fa3a5"/><rect x="2" y="1" width="20" height="18" rx="3" fill="#fff"/><path d="M9 6.500v5M14.500 6.500v5" stroke="#333" stroke-width="1.200"/></svg><i class="w-[6px] h-[3px] rounded-full bg-[#a79bb0]"></i></button>
    <button class="w-11 flex flex-col items-center pt-[3px]" aria-label="Unity editor windows"><span class="w-10 h-10 flex flex-col items-center justify-between rounded-[4px] border-r-4 border-[#4c2040] bg-[#5a2a46] pl-1 pt-2 pb-px"><svg class="size-6"><use href="#unity6"/></svg><i class="w-4 h-[3px] rounded-full bg-[#ff9aa8]"></i></span></button>
    <button class="w-11 flex flex-col items-center pt-[11px] gap-1" aria-label="Rider"><svg class="size-6" viewBox="0 0 24 24"><path d="M8 0h15l1 19-8 1z" fill="#fcaa17"/><path d="M2 3l6-1 2 14-8-4z" fill="#2488f5"/><path d="M0 8l8 3 6 12-12 1-2-2z" fill="#f71f78"/><path d="M18 8l6 3-1 9-7 2z" fill="#1f8cf5"/><rect x="4.500" y="4.500" width="15" height="15" fill="#000"/><text x="12" y="12.500" text-anchor="middle" font-family="Open Sans" font-weight="700" font-size="8" fill="#fff">RD</text><path d="M7 16.500h5" stroke="#fff"/></svg><i class="w-[6px] h-[3px] rounded-full bg-[#a79bb0]"></i></button>
  </nav>
  <div class="flex items-center justify-end pr-5 text-[#f0eaf2] font-['Roboto',sans-serif]">
    <button aria-label="Hidden icons"><svg class="w-3 h-[7px]" viewBox="0 0 12 7"><path d="M1 6l5-5 5 5" stroke="currentColor" stroke-width="1.400" fill="none"/></svg></button>
    <button class="ml-5" aria-label="Microphone"><svg class="w-3 h-4" viewBox="0 0 12 16"><rect x="3.500" y=".6" width="5" height="9" rx="2.500" stroke="#c998d8" stroke-width="1.200" fill="none"/><path d="M1 7.500a5 5 0 0 0 10 0M6 12.500V16" stroke="#c998d8" stroke-width="1.200" fill="none"/></svg></button>
    <button class="ml-[18px]" aria-label="Network"><svg class="w-4 h-4" viewBox="0 0 16 16"><path d="M11 1H2Q.6 1 .6 2.400v8.200Q.6 12 2 12h10q1.500 0 1.500-1.500V8M4 15h7M5.500 12v3M9.500 12v3M11.500 1h4v4.500h-4zM13.500 5.500V9" stroke="currentColor" stroke-width="1.100" fill="none"/></svg></button>
    <button class="ml-2" aria-label="Volume"><svg class="w-[17px] h-[14px]" viewBox="0 0 17 14"><path d="M.6 5h2.500L7 1.500v11L3.100 9H.6zM9 5q1.300 2 0 4M11.200 3q2.800 4 0 8M13.500 1.200q4 5.800 0 11.600" stroke="currentColor" stroke-width="1.100" fill="none"/></svg></button>
    <time class="ml-[13px] text-right leading-4">22:15<br>01/02/2025</time>
    <button class="ml-2" aria-label="Notifications"><svg class="w-[14px] h-4" viewBox="0 0 14 16"><path d="M7 1a4.600 4.600 0 0 1 4.600 4.600V9l1.600 3H.8l1.600-3V5.600A4.600 4.600 0 0 1 7 1zM5 12.500a2 2 0 0 0 4 0" stroke="currentColor" stroke-width="1.100" fill="none"/></svg></button>
  </div>
</footer>
</body>
</html>
